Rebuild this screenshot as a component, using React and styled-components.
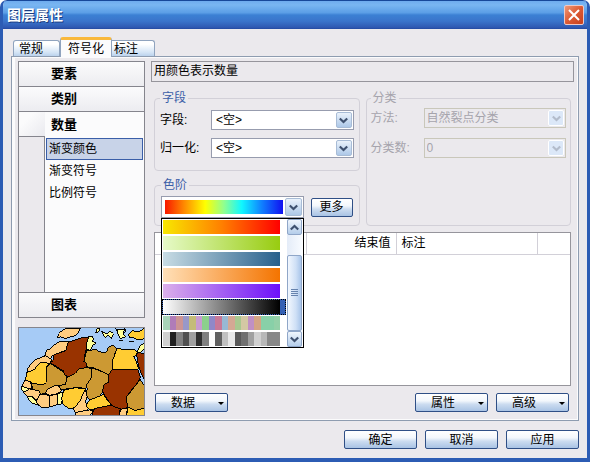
import React, { useState } from 'react'
import styled, { createGlobalStyle, css } from 'styled-components'

const GlobalStyle = createGlobalStyle`
  *, *::before, *::after {
    box-sizing: border-box;
  }

  body {
    margin: 0;
    background: #fff;
    font-family: "Liberation Sans", "Noto Sans CJK SC", sans-serif;
    font-size: 12px;
    line-height: 16px;
    color: #000;
  }

  button, select {
    font: inherit;
    color: inherit;
    margin: 0;
    padding: 0;
  }
`;

const Window = styled.div`
  display: flex;
  flex-direction: column;
  min-height: 100vh;
  border: solid #2c5cb4;
  border-width: 0 3px 4px;
  border-radius: 7px 7px 0 0;
  background: #ebe9ed;
  overflow: hidden;
`;

const TitleBar = styled.header`
  display: flex;
  align-items: center;
  justify-content: space-between;
  height: 29px;
  margin: 0 -3px;
  padding: 0 6px 0 7px;
  border-top: 1px solid #17489a;
  border-radius: 7px 7px 0 0;
  background: linear-gradient(#6eabee 0%, #79b6f2 14%, #5b9ee6 42%, #3b80d4 50%, #3a74cb 72%, #2f59b2 94%, #2349a0 100%);
`;

const Title = styled.h1`
  margin: 0;
  font-size: 14px;
  line-height: 20px;
  font-weight: 700;
  color: #fff;
  text-shadow: 1px 1px #1b3c80;
`;

const CloseButton = styled.button`
  display: flex;
  align-items: center;
  justify-content: center;
  width: 20px;
  height: 20px;
  border: 1px solid #f0c8c4;
  border-radius: 2px;
  background: linear-gradient(135deg, #ee9878 0%, #dc5a34 50%, #c8401c 100%);
`;

const Body = styled.main`
  display: flex;
  flex-direction: column;
  flex: 1;
  padding: 8px 8px 9px;
`;

const TabList = styled.div`
  display: flex;
  align-items: flex-end;
  height: 20px;
  padding-left: 2px;
`;

const Tab = styled.button`
  height: 17px;
  padding: 0 16px 0 5px;
  border: 1px solid #8fa3be;
  border-bottom: 0;
  border-radius: 3px 3px 0 0;
  background: linear-gradient(#fff 20%, #d5e5f6 70%, #b4cdea);
  line-height: 16px;

  ${({ $active }) => $active && css`
    position: relative;
    height: 20px;
    margin-right: -4px;
    padding: 0 7px;
    border-top: 3px solid #f9b83c;
    background: #fbfbfc;
  `}
`;

const Panel = styled.section`
  display: grid;
  grid-template-columns: 127px 1fr;
  gap: 6px;
  flex: 1;
  margin-top: -1px;
  padding: 4px 4px 4px 6px;
  border: 1px solid #8e9cb0;
  box-shadow: inset 3px 1px #fbfbfc, inset -1px -1px #fbfbfc;
`;

const Sidebar = styled.div`
  display: flex;
  flex-direction: column;
  gap: 9px;
`;

const Categories = styled.nav`
  display: flex;
  flex-direction: column;
  flex: 1;
  border: 1px solid #85858d;
`;

const Category = styled.button`
  height: 25px;
  padding-left: 32px;
  border: 0;
  border-bottom: 1px solid #85858d;
  background: linear-gradient(#fbfbfc, #ececf0);
  font-size: 13px;
  font-weight: 700;
  text-align: left;

  ${({ $open }) => $open && css`
    border-bottom: 0;
    background:
      linear-gradient(#85858d, #85858d) 0 100% / 26px 1px no-repeat,
      linear-gradient(135deg, #fbfbfc 30%, #e9e9ee) 0 0 / 26px 100% no-repeat,
      #fbfbfc;
  `}

  ${({ $last }) => $last && css`
    border-top: 1px solid #85858d;
    border-bottom: 0;
  `}
`;

const Renderers = styled.ul`
  flex: 1;
  margin: 0 0 0 25px;
  padding: 1px;
  border-left: 1px solid #85858d;
  background: #fbfbfc;
  list-style: none;
`;

const Renderer = styled.button`
  display: block;
  width: 100%;
  height: 22px;
  padding-left: 2px;
  border: 1px solid ${({ $active }) => ($active ? '#3a5ea8' : 'transparent')};
  background: ${({ $active }) => ($active ? '#c8d3e8' : 'none')};
  text-align: left;
`;

const MapPreview = styled.svg`
  display: block;
  width: 127px;
  height: 89px;
  border: 1px solid #85858d;
  background: #a6cbf6;
`;

const Content = styled.div`
  display: flex;
  flex-direction: column;
  min-width: 0;
`;

const Caption = styled.h2`
  height: 21px;
  margin: 0;
  padding: 0 2px;
  border: 1px solid #96959c;
  font-size: 12px;
  line-height: 18px;
  font-weight: 400;
`;

const Settings = styled.div`
  display: grid;
  grid-template-columns: 1fr 1fr;
  gap: 6px;
  padding: 8px 3px 6px 3px;
`;

const Column = styled.div`
  display: flex;
  flex-direction: column;
  gap: 6px;
`;

const Group = styled.fieldset`
  min-width: 0;
  margin: 0;
  padding: ${({ $padding }) => $padding};
  border: 1px solid #d2d0d8;
  border-radius: 4px;
  color: ${({ disabled }) => (disabled ? '#a6a4ac' : '#000')};
`;

const Legend = styled.legend`
  height: 16px;
  padding: 0 2px;
  color: ${({ $muted }) => ($muted ? '#a6a4ac' : '#3c5fa8')};
`;

const Fields = styled.div`
  display: grid;
  grid-template-columns: ${({ $label }) => $label} 1fr;
  align-items: center;
  row-gap: ${({ $gap }) => $gap};
`;

const SelectBox = styled.div`
  display: grid;
  grid-template-columns: 1fr 18px;
  height: 20px;
  padding: 1px;
  border: 1px solid ${({ $disabled }) => ($disabled ? '#c9c7ba' : '#979cae')};
  background: ${({ $disabled }) => ($disabled ? '#ebe9ed' : '#fff')};
`;

const Select = styled.select`
  grid-column: 1 / -1;
  grid-row: 1;
  width: 100%;
  height: 16px;
  padding-left: ${({ $indent }) => $indent || '3px'};
  border: 0;
  background: none;
  appearance: none;
  line-height: 16px;
  opacity: 1;

  &:disabled {
    color: #a6a4ac;
  }
`;

const Arrow = styled.span`
  grid-column: 2;
  grid-row: 1;
  display: flex;
  align-items: center;
  justify-content: center;
  width: ${({ $width }) => $width || '16px'};
  border: 1px solid ${({ $muted }) => ($muted ? '#fff' : '#a8bcd6')};
  border-radius: 2px;
  justify-self: end;
  background: ${({ $muted }) => ($muted ? '#dce8f8' : 'linear-gradient(#eaf2fb, #adc8e8)')};
  color: ${({ $muted }) => ($muted ? '#b3bccb' : '#3f516f')};
  pointer-events: none;
`;

const RampRow = styled.div`
  display: grid;
  grid-template-columns: 1fr 42px;
  align-items: center;
  gap: 7px;
`;

const RampPicker = styled.div`
  position: relative;
`;

const RampButton = styled.button`
  display: grid;
  grid-template-columns: 1fr 17px;
  gap: 2px;
  width: 100%;
  height: 22px;
  padding: 1px 1px 1px 3px;
  border: 1px solid #979cae;
  background: #fff;
`;

const Ramp = styled.span`
  display: flex;
  flex: 0 0 117px;
  height: 14px;
  background: ${({ $fill }) => $fill || 'none'};
  align-self: center;
`;

const Stripe = styled.span`
  flex: 1;
  background: ${({ $color }) => $color};
`;

const RampMenu = styled.div`
  position: absolute;
  top: 100%;
  left: 0;
  z-index: 2;
  display: grid;
  grid-template-columns: 1fr 16px;
  gap: 1px;
  width: 100%;
  border: 1px solid #000;
  background: #fff;
`;

const RampList = styled.ul`
  margin: 0;
  padding: 0;
  list-style: none;
`;

const RampOption = styled.li`
  display: flex;
  height: 16px;
  padding: 1px;
  background: ${({ $active }) => ($active ? '#3460b4' : '#fff')};
  outline: ${({ $active }) => ($active ? '1px dotted #000' : 'none')};
  outline-offset: -1px;
`;

const Scrollbar = styled.div`
  display: flex;
  flex-direction: column;
  margin-right: 1px;
  background: linear-gradient(90deg, #e4ecf8, #f8fbff);
`;

const ScrollButton = styled.button`
  display: flex;
  align-items: center;
  justify-content: center;
  height: 16px;
  border: 1px solid #8fa6c8;
  border-radius: 2px;
  background: linear-gradient(#f0f6fd, #b4cdea);
  color: #3f516f;
`;

const ScrollTrack = styled.div`
  display: flex;
  flex-direction: column;
  justify-content: flex-end;
  flex: 1;
`;

const ScrollThumb = styled.div`
  display: flex;
  align-items: center;
  justify-content: center;
  height: 76px;
  border: 1px solid #8fa6c8;
  border-radius: 2px;
  background: linear-gradient(90deg, #f2f7fe, #cfe0f6 60%, #a9c5ea);
  color: #6683ae;
`;

const Button = styled.button`
  position: relative;
  width: ${({ $width }) => $width || '73px'};
  height: 19px;
  border: 1px solid #2f4f86;
  border-radius: 2px;
  background: linear-gradient(#fff 0%, #f3f7fc 40%, #ccdcf0 60%, #a9c3e4 100%);
  line-height: 16px;
`;

const MenuButton = styled(Button)`
  padding-right: 17px;

  &::after {
    content: '';
    position: absolute;
    right: 3px;
    bottom: 6px;
    border: solid transparent;
    border-width: 3px 3px 0;
    border-top-color: #000;
  }
`;

const TableFrame = styled.div`
  flex: 1;
  margin: 0 3px;
  border: 1px solid #96959c;
  background: #fff;
`;

const ClassTable = styled.table`
  width: 100%;
  table-layout: fixed;
  border-collapse: collapse;

  th {
    height: 21px;
    padding: 0 5px;
    border-right: 1px solid #d2d0d8;
    border-bottom: 1px solid #d2d0d8;
    font-weight: 400;
    text-align: left;
  }

  th:last-child {
    border-right: 0;
  }
`;

const HeadCell = styled.th`
  width: ${({ $width }) => $width || 'auto'};

  ${ClassTable} & {
    text-align: ${({ $align }) => $align || 'left'};
  }
`;

const TableActions = styled.div`
  display: flex;
  gap: 8px;
  padding: 7px 5px 4px 4px;

  ${Button}:first-child {
    margin-right: auto;
  }
`;

const Footer = styled.footer`
  display: flex;
  justify-content: flex-end;
  gap: 8px;
  padding-top: 9px;
`;

const Chevron = ({ up }) => (
  <svg width="9" height="7" viewBox="0 0 9 7" fill="none" stroke="currentColor" strokeWidth="2.2" aria-hidden="true">
    <path d={up ? 'M.8 5.5 4.5 2 8.2 5.5' : 'M.8 1.5 4.5 5 8.2 1.5'} />
  </svg>
);

const ramps = [
  { name: '黄红', fill: 'linear-gradient(90deg, #f8e800, #ff8000 50%, #ff0000)' },
  { name: '绿', fill: 'linear-gradient(90deg, #e6fac8, #98cc10)' },
  { name: '蓝', fill: 'linear-gradient(90deg, #c8dce4, #28608c)' },
  { name: '橙', fill: 'linear-gradient(90deg, #ffe0b8, #f47400)' },
  { name: '紫', fill: 'linear-gradient(90deg, #dcb0ea, #6c10fa)' },
  { name: '灰', fill: 'linear-gradient(90deg, #fff, #000)' },
  {
    name: '彩色',
    stripes: ['#a8d4b8', '#b07cb8', '#cc9494', '#9898c8', '#c4bc78', '#c89cd0', '#8cd08c', '#9088c8', '#c87898', '#98b8d4',
      '#d4a894', '#a8c890', '#d4c8a4', '#c090c4', '#d4a484', '#88d0a8', '#88d0a8', '#94d0a8'],
  },
  {
    name: '黑白',
    stripes: ['#d0d0d0', '#202020', '#808080', '#505050', '#a0a0a0', '#303030', '#808080', '#fcfcfc', '#606060', '#c0c0c0',
      '#e8e8e8', '#585858', '#707070', '#a0a0a0', '#d0d0d0', '#b8b8b8', '#888888', '#888888'],
  },
];

const spectrum = 'linear-gradient(90deg, #f81800, #ff8800 16%, #ffff00 34%, #90ff90 50%, #10f8ff 65%, #1080ff 82%, #1010f0)';

const tan = '#cc9933';
const brown = '#993300';
const gold = '#ffcc33';
const peach = '#ffcc80';
const cream = '#ffff99';

const countries = [
  [peach, '141,171 145,158 160,145 178,141 212,141 206,153 197,163 181,168 165,173 150,168'],
  [peach, '176,183 166,182 145,184 131,194 120,204 108,210 104,224 94,232 118,240 124,228 146,217 170,208'],
  [peach, '106,226 90,232 75,238 62,250 50,266 48,278 72,268 78,258 96,246 118,250 124,238'],
  [gold, '48,278 72,268 80,256 92,246 119,250 108,258 107,308 100,314 72,314 60,307 44,300'],
  [brown, '172,186 190,179 212,172 240,168 232,182 230,202 224,226 228,248 231,262 208,266 196,280 178,292 163,284 160,275 117,248 128,238 128,225 150,216 168,210'],
  [cream, '236,168 248,165 251,175 246,181 258,187 250,194 240,210 229,206 229,192'],
  [tan, '240,210 260,206 267,214 290,216 297,200 310,194 323,204 314,225 309,280 298,285 250,262 234,264 228,248 222,244 226,226 230,210'],
  [gold, '323,204 350,207 374,206 385,214 381,226 374,228 385,254 388,268 310,268 310,238'],
  [tan, '119,250 160,276 164,286 170,292 166,314 144,318 128,320 112,330 106,340 92,344 84,334 66,332 62,312 100,314 107,308 108,262'],
  [tan, '170,294 196,280 208,266 234,262 246,268 244,294 228,326 196,324 168,328 154,330 144,318 166,314'],
  [tan, '246,264 270,272 298,285 298,308 284,316 278,338 270,352 240,362 228,350 232,328 228,318 244,294'],
  [brown, '308,268 386,268 394,292 382,314 368,330 352,352 356,380 344,392 318,386 302,374 288,352 278,334 284,314 298,308 298,284'],
  [tan, '393,298 405,316 405,388 376,394 354,382 352,352 368,332 382,314'],
  [brown, '382,222 390,216 405,220 405,298 398,284 388,256'],
  [cream, '384,214 394,194 405,188 405,206 394,218'],
  [peach, '42,300 60,307 62,328 48,326 33,318'],
  [cream, '31,320 58,328 48,336 34,334'],
  [peach, '38,338 56,328 84,334 92,346 86,362 74,360 62,350 50,352'],
  [cream, '50,352 62,350 74,362 84,378 66,372 54,362'],
  [peach, '86,346 106,344 116,350 116,384 90,384 76,368'],
  [peach, '104,340 112,328 128,320 142,316 154,334 136,344 116,348'],
  [peach, '117,348 140,344 140,376 118,384'],
  [cream, '142,342 158,338 154,374 143,376'],
  [gold, '160,332 196,324 226,328 224,344 208,368 194,386 174,388 158,374 154,356'],
  [peach, '226,330 232,352 226,366 236,386 224,402 196,400 190,388 208,368'],
  [gold, '228,378 240,362 270,350 282,344 290,358 306,378 282,386 248,392 236,390'],
  [peach, '196,400 240,392 250,396 242,408 196,408'],
  [brown, '246,408 254,388 306,378 332,390 330,408'],
  [peach, '330,408 334,390 354,388 352,408'],
  [gold, '352,408 356,384 376,394 405,388 405,408'],
  [gold, '358,160 370,150 392,151 405,143 405,174 390,178 370,170 360,170'],
  [cream, '276,150 292,160 300,150 312,158 306,172 296,164 286,170'],
  [cream, '324,146 346,144 342,158 348,168 334,174 326,160'],
  [cream, '262,143 272,143 266,152 258,156'],
];

const AfricaMap = () => (
  <MapPreview viewBox="24 141 381 267" preserveAspectRatio="none" shapeRendering="crispEdges" role="img" aria-label="预览">
    {countries.map(([fill, points]) => (
      <polygon key={points} points={points} fill={fill} stroke="#000" strokeWidth="3" />
    ))}
    <path d="M328 180h14M358 182h16M318 142l8 12M350 144l-4 12" stroke="#000" strokeWidth="3" fill="none" />
  </MapPreview>
);

const SelectField = ({ id, label, value, disabled, indent }) => (
  <>
    <label htmlFor={id}>{label}</label>
    <SelectBox $disabled={disabled}>
      <Arrow $muted={disabled}><Chevron /></Arrow>
      <Select id={id} disabled={disabled} $indent={indent}>
        <option>{value}</option>
      </Select>
    </SelectBox>
  </>
);

const RampMenuList = ({ selected, onSelect }) => (
  <RampMenu>
    <RampList role="listbox" aria-label="色阶">
      {ramps.map((ramp, i) => (
        <RampOption
          key={ramp.name}
          role="option"
          aria-label={ramp.name}
          aria-selected={i === selected}
          $active={i === selected}
          onClick={() => onSelect(i)}
        >
          <Ramp $fill={ramp.fill}>
            {ramp.stripes && ramp.stripes.map((color, n) => <Stripe key={n} $color={color} />)}
          </Ramp>
        </RampOption>
      ))}
    </RampList>
    <Scrollbar>
      <ScrollButton aria-label="向上"><Chevron up /></ScrollButton>
      <ScrollTrack>
        <ScrollThumb>
          <svg width="7" height="8" viewBox="0 0 7 8" stroke="currentColor" aria-hidden="true">
            <path d="M0 .5h7M0 2.5h7M0 4.5h7M0 6.5h7" />
          </svg>
        </ScrollThumb>
      </ScrollTrack>
      <ScrollButton aria-label="向下"><Chevron /></ScrollButton>
    </Scrollbar>
  </RampMenu>
);

const App = () => {
  const [tab, setTab] = useState('符号化');
  const [renderer, setRenderer] = useState('渐变颜色');
  const [open, setOpen] = useState(true);
  const [ramp, setRamp] = useState(5);

  return (
    <>
      <GlobalStyle />
      <Window>
        <TitleBar>
          <Title>图层属性</Title>
          <CloseButton aria-label="关闭">
            <svg width="12" height="12" viewBox="0 0 12 12" stroke="#fff" strokeWidth="2" aria-hidden="true">
              <path d="M1 1l10 10M11 1L1 11" />
            </svg>
          </CloseButton>
        </TitleBar>
        <Body>
          <TabList role="tablist">
            {['常规', '符号化', '标注'].map((name) => (
              <Tab key={name} role="tab" aria-selected={tab === name} $active={tab === name} onClick={() => setTab(name)}>
                {name}
              </Tab>
            ))}
          </TabList>
          <Panel>
            <Sidebar>
              <Categories>
                <Category>要素</Category>
                <Category>类别</Category>
                <Category $open>数量</Category>
                <Renderers>
                  {['渐变颜色', '渐变符号', '比例符号'].map((name) => (
                    <li key={name}>
                      <Renderer $active={renderer === name} onClick={() => setRenderer(name)}>{name}</Renderer>
                    </li>
                  ))}
                </Renderers>
                <Category $last>图表</Category>
              </Categories>
              <AfricaMap />
            </Sidebar>
            <Content>
              <Caption>用颜色表示数量</Caption>
              <Settings>
                <Column>
                  <Group $padding="4px 5px 12px">
                    <Legend>字段</Legend>
                    <Fields $label="51px" $gap="8px">
                      <SelectField id="field" label="字段:" value="<空>" />
                      <SelectField id="normalize" label="归一化:" value="<空>" />
                    </Fields>
                  </Group>
                  <Group $padding="3px 6px 7px">
                    <Legend>色阶</Legend>
                    <RampRow>
                      <RampPicker>
                        <RampButton aria-label="色阶" aria-expanded={open} onClick={() => setOpen(!open)}>
                          <Ramp $fill={spectrum} />
                          <Arrow $width="17px"><Chevron /></Arrow>
                        </RampButton>
                        {open && <RampMenuList selected={ramp} onSelect={setRamp} />}
                      </RampPicker>
                      <Button $width="42px">更多</Button>
                    </RampRow>
                  </Group>
                </Column>
                <Group disabled $padding="2px 4px">
                  <Legend $muted>分类</Legend>
                  <Fields $label="53px" $gap="10px">
                    <SelectField id="method" label="方法:" value="自然裂点分类" disabled indent="1px" />
                    <SelectField id="classes" label="分类数:" value="0" disabled indent="1px" />
                  </Fields>
                </Group>
              </Settings>
              <TableFrame>
                <ClassTable>
                  <thead>
                    <tr>
                      <HeadCell $width="151px" />
                      <HeadCell $width="90px" $align="right">结束值</HeadCell>
                      <HeadCell>标注</HeadCell>
                      <HeadCell $width="33px" />
                    </tr>
                  </thead>
                </ClassTable>
              </TableFrame>
              <TableActions>
                <MenuButton>数据</MenuButton>
                <MenuButton>属性</MenuButton>
                <MenuButton>高级</MenuButton>
              </TableActions>
            </Content>
          </Panel>
          <Footer>
            <Button>确定</Button>
            <Button>取消</Button>
            <Button>应用</Button>
          </Footer>
        </Body>
      </Window>
    </>
  );
}

export default App
